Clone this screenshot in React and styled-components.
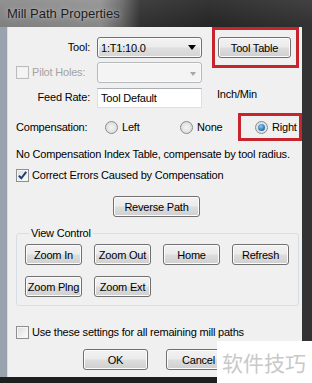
import React from "react";
import styled, { createGlobalStyle } from "styled-components";

const GlobalStyle = createGlobalStyle`
  html, body {
    margin: 0;
    padding: 0;
    background: #1e1e1e;
  }
  body {
    font-family: "Liberation Sans", Arial, sans-serif;
    font-size: 11px;
    letter-spacing: -0.2px;
    color: #000;
  }
`;

const Window = styled.div`
  position: relative;
  width: 312px;
  height: 383px;
  display: flex;
  flex-direction: column;
  overflow: hidden;
`;

const TitleBar = styled.div`
  height: 27px;
  flex: none;
  display: flex;
  align-items: center;
  padding-left: 7px;
  background: linear-gradient(rgba(255, 255, 255, 0.06), rgba(0, 0, 0, 0.08)),
    linear-gradient(90deg, #8a8a8a 0, #939393 100px, #6a6a6a 122px, #343434 140px, #282828 210px, #363636 312px);
`;

const Title = styled.span`
  font-size: 13px;
  letter-spacing: 0;
  color: #1b1b1b;
  text-shadow: 0 0 6px rgba(255, 255, 255, 0.45), 0 0 2px rgba(255, 255, 255, 0.3);
`;

const FrameBody = styled.div`
  flex: 1;
  display: flex;
  padding: 0 10px 6px 7px;
  background: linear-gradient(to top, #1e1e1e 0 6px, transparent 6px),
    linear-gradient(90deg, #98a3ae 0 7px, #333 7px);
`;

const Client = styled.div`
  flex: 1;
  display: flex;
  flex-direction: column;
  align-items: flex-start;
  background: #f0f0f0;
  border-left: 1px solid #d6dde4;
  padding-left: 8px;
`;

const TopArea = styled.div`
  display: flex;
`;

const FieldGrid = styled.div`
  display: grid;
  grid-template-columns: 74px 105px;
  grid-template-rows: repeat(3, 21px);
  column-gap: 7px;
  row-gap: 4px;
  padding-top: 10px;
  align-items: center;
`;

const Label = styled.span`
  justify-self: ${(p) => (p.$start ? "start" : "end")};
  display: flex;
  align-items: center;
  gap: 3px;
  line-height: 13px;
  color: ${(p) => (p.$disabled ? "#a3a3a3" : "#000")};
`;

const Select = styled.div`
  height: 21px;
  box-sizing: border-box;
  display: flex;
  align-items: center;
  padding-left: 3px;
  border: 1px solid ${(p) => (p.$disabled ? "#b5b9bc" : "#707070")};
  border-radius: 3px;
  background: ${(p) =>
    p.$disabled
      ? "#f4f4f4"
      : "linear-gradient(#f3f3f3 0%, #ececec 48%, #dfdfdf 52%, #d5d5d5 100%)"};
  box-shadow: inset 0 0 0 1px ${(p) => (p.$disabled ? "#fafafa" : "#fbfbfb")};
`;

const Arrow = styled.span`
  margin-left: auto;
  margin-right: 5px;
  margin-top: ${(p) => (p.$disabled ? "3px" : "0")};
  width: 0;
  height: 0;
  border-left: ${(p) => (p.$disabled ? 3 : 4)}px solid transparent;
  border-right: ${(p) => (p.$disabled ? 3 : 4)}px solid transparent;
  border-top: ${(p) => (p.$disabled ? 4 : 5)}px solid ${(p) => (p.$disabled ? "#a6a6a6" : "#000")};
`;

const TextInput = styled.div`
  height: 20px;
  box-sizing: border-box;
  display: flex;
  align-items: center;
  padding-left: 3px;
  background: #fff;
  border: 1px solid #dbdfe6;
  border-top-color: #abadb3;
`;

const RightColumn = styled.div`
  display: flex;
  flex-direction: column;
  align-items: flex-start;
  margin-left: 10px;
`;

const Highlight = styled.div`
  box-sizing: border-box;
  width: ${(p) => p.$w}px;
  height: ${(p) => p.$h}px;
  border: 3px solid #c7252d;
  display: flex;
  align-items: center;
  justify-content: ${(p) => (p.$center ? "center" : "flex-start")};
  padding: ${(p) => (p.$center ? "0 2px 0 0" : "0 0 0 14px")};
`;

const Unit = styled.span`
  margin: 20px 0 0 5px;
  line-height: 13px;
`;

const Button = styled.button`
  width: ${(p) => p.$w}px;
  height: 21px;
  padding: 0;
  font: inherit;
  letter-spacing: -0.2px;
  color: #000;
  border: 1px solid #707070;
  border-radius: 3px;
  background: linear-gradient(#f2f2f2 0%, #ebebeb 48%, #dddddd 52%, #cfcfcf 100%);
  box-shadow: inset 0 0 0 1px #fcfcfc;
  margin-left: ${(p) => p.$left || 0}px;
  margin-top: ${(p) => p.$top || 0}px;
`;

const RadioRow = styled.div`
  display: flex;
  align-items: center;
  height: 28px;
  margin-top: 5px;
`;

const CompLabel = styled.span`
  width: 89px;
  line-height: 13px;
`;

const RadioOption = styled.label`
  width: ${(p) => (p.$w ? `${p.$w}px` : "auto")};
  display: flex;
  align-items: center;
  gap: 4px;
  line-height: 13px;
`;

const Radio = styled.span`
  box-sizing: border-box;
  width: 13px;
  height: 13px;
  border-radius: 50%;
  border: 1px solid #8a8a8a;
  background: radial-gradient(circle at 50% 50%, #f4f4f4 0%, #e2e2e2 60%, #d6d6d6 100%);
  display: flex;
  align-items: center;
  justify-content: center;

  &::after {
    content: "";
    display: ${(p) => (p.$checked ? "block" : "none")};
    width: 7px;
    height: 7px;
    border-radius: 50%;
    background: radial-gradient(circle at 40% 35%, #8fd0f5 0%, #2e7fc0 55%, #134a86 100%);
  }
`;

const Note = styled.p`
  margin: 7px 0 0;
  line-height: 13px;
`;

const CheckRow = styled.label`
  display: flex;
  align-items: center;
  gap: 3px;
  height: 13px;
  margin-top: ${(p) => p.$top}px;
  line-height: 13px;
`;

const CheckBox = styled.span`
  box-sizing: border-box;
  width: 13px;
  height: 13px;
  border: 1px solid ${(p) => (p.$disabled ? "#bcbcbc" : "#8e8f8f")};
  background: ${(p) =>
    p.$disabled ? "#f4f4f4" : "linear-gradient(135deg, #dcdcdc 0%, #f4f4f4 70%, #ffffff 100%)"};
  box-shadow: inset 0 0 0 1px ${(p) => (p.$disabled ? "#f0f0f0" : "#f6f6f6")};
  display: flex;
  align-items: center;
  justify-content: center;
`;

const GroupBox = styled.fieldset`
  box-sizing: border-box;
  width: 283px;
  margin: 10px 0 0;
  padding: 0 0 8px 8px;
  border: 1px solid #d5dfe5;
  border-radius: 3px;
`;

const Legend = styled.legend`
  margin-left: 4px;
  padding: 0 2px;
  line-height: 13px;
`;

const ButtonGrid = styled.div`
  display: grid;
  grid-template-columns: repeat(4, 57px);
  grid-auto-rows: 21px;
  column-gap: 12px;
  row-gap: 11px;
  margin-top: 4px;
`;

const Footer = styled.div`
  display: flex;
  gap: 18px;
  margin: 10px 0 0 67px;
`;

const Watermark = styled.div`
  position: absolute;
  right: 0;
  bottom: 0;
  width: 95px;
  height: 42px;
  box-sizing: border-box;
  padding-left: 5px;
  display: flex;
  align-items: center;
  background: #fff;
  font-family: "Noto Sans CJK SC", sans-serif;
  font-size: 21px;
  letter-spacing: 0;
  color: #c9c9c9;
`;

const Check = () => (
  <svg width="11" height="11" viewBox="0 0 11 11">
    <path d="M1.8 5.6 L4.3 8.3 L9.2 1.8" fill="none" stroke="#1f3f73" strokeWidth="2" />
  </svg>
);

export default function App() {
  return (
    <Window>
      <GlobalStyle />
      <TitleBar>
        <Title>Mill Path Properties</Title>
      </TitleBar>
      <FrameBody>
        <Client>
          <TopArea>
            <FieldGrid>
              <Label>Tool:</Label>
              <Select>
                1:T1:10.0
                <Arrow />
              </Select>
              <Label $start $disabled>
                <CheckBox $disabled />
                Pilot Holes:
              </Label>
              <Select $disabled>
                <Arrow $disabled />
              </Select>
              <Label>Feed Rate:</Label>
              <TextInput>Tool Default</TextInput>
            </FieldGrid>
            <RightColumn>
              <Highlight $w={87} $h={41} $center>
                <Button $w={73}>Tool Table</Button>
              </Highlight>
              <Unit>Inch/Min</Unit>
            </RightColumn>
          </TopArea>

          <RadioRow>
            <CompLabel>Compensation:</CompLabel>
            <RadioOption $w={75}>
              <Radio />
              Left
            </RadioOption>
            <RadioOption $w={58}>
              <Radio />
              None
            </RadioOption>
            <Highlight $w={64} $h={28}>
              <RadioOption>
                <Radio $checked />
                Right
              </RadioOption>
            </Highlight>
          </RadioRow>

          <Note>No Compensation Index Table, compensate by tool radius.</Note>

          <CheckRow $top={8}>
            <CheckBox>
              <Check />
            </CheckBox>
            Correct Errors Caused by Compensation
          </CheckRow>

          <Button $w={87} $left={97} $top={14}>
            Reverse Path
          </Button>

          <GroupBox>
            <Legend>View Control</Legend>
            <ButtonGrid>
              <Button $w={57}>Zoom In</Button>
              <Button $w={57}>Zoom Out</Button>
              <Button $w={57}>Home</Button>
              <Button $w={57}>Refresh</Button>
              <Button $w={57}>Zoom Plng</Button>
              <Button $w={57}>Zoom Ext</Button>
            </ButtonGrid>
          </GroupBox>

          <CheckRow $top={20}>
            <CheckBox />
            Use these settings for all remaining mill paths
          </CheckRow>

          <Footer>
            <Button $w={65}>OK</Button>
            <Button $w={65}>Cancel</Button>
          </Footer>
        </Client>
      </FrameBody>
      <Watermark>软件技巧</Watermark>
    </Window>
  );
}
